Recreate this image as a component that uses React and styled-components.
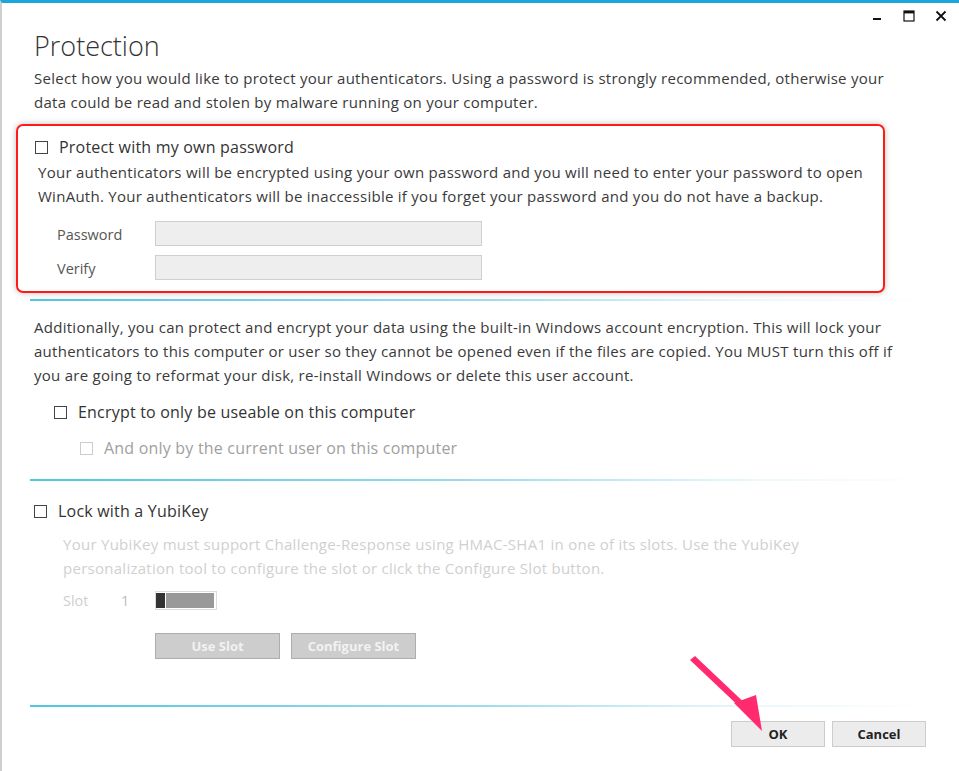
import styled, { createGlobalStyle } from "styled-components";

const GlobalStyle = createGlobalStyle`
  html, body {
    margin: 0;
    padding: 0;
    background: #ffffff;
  }
  body {
    font-family: "Open Sans", "Noto Sans", sans-serif;
    color: #3a3a3a;
  }
`;

const Window = styled.div`
  position: relative;
  width: 959px;
  height: 771px;
  box-sizing: border-box;
  border-top: 3px solid #1ba6dc;
  border-left: 2px solid #cfcfcf;
  background: #fff;
  overflow: hidden;
`;

const TitleBar = styled.div`
  display: flex;
  justify-content: flex-end;
  align-items: center;
  gap: 20px;
  height: 26px;
  padding-right: 12px;
`;

const Control = styled.div`
  width: 12px;
  height: 12px;
  display: flex;
  align-items: center;
  justify-content: center;
`;

const Content = styled.div`
  padding: 0 0 0 32px;
`;

const Heading = styled.h1`
  margin: 0;
  font-family: "Open Sans", sans-serif;
  font-weight: 300;
  font-size: 27px;
  line-height: 34px;
  color: #333;
  margin-bottom: 3px;
`;

const Para = styled.p`
  margin: ${(p) => p.$top || 0}px 0 0 ${(p) => p.$left || 0}px;
  font-size: 15px;
  line-height: ${(p) => p.$lh || 24}px;
  letter-spacing: 0.27px;
  color: ${(p) => (p.$muted ? "#d0d0d0" : "#3a3a3a")};
  white-space: nowrap;
`;

const Highlight = styled.div`
  margin: 10px 0 0 -18px;
  width: 869px;
  box-sizing: border-box;
  border: 2px solid #ff1a1a;
  border-radius: 7px;
  box-shadow: 0 0 6px rgba(0, 0, 0, 0.25);
  padding: 9px 0 11px 17px;
`;

const CheckRow = styled.label`
  display: flex;
  align-items: center;
  gap: 11px;
  height: 24px;
  margin: ${(p) => p.$top || 0}px 0 0 ${(p) => p.$left || 0}px;
  font-size: 16px;
  letter-spacing: 0.2px;
  color: ${(p) => (p.$disabled ? "#a0a0a0" : "#333")};
`;

const Box = styled.span`
  width: 11px;
  height: 11px;
  border: 1px solid ${(p) => (p.$disabled ? "#cccccc" : "#444")};
  background: #fff;
  flex: none;
`;

const FieldGrid = styled.div`
  display: grid;
  grid-template-columns: 98px 327px;
  row-gap: 9px;
  margin: 13px 0 0 22px;
  align-items: center;
`;

const FieldLabel = styled.span`
  font-size: 14.5px;
  color: #555;
  padding-top: 2px;
`;

const Input = styled.div`
  height: 25px;
  box-sizing: border-box;
  border: 1px solid #cfcfcf;
  background: #eeeeee;
`;

const Separator = styled.div`
  height: 2px;
  width: 900px;
  margin: ${(p) => p.$top}px 0 0 -4px;
  background: linear-gradient(90deg, #4fc6e2 0%, #9ddcec 50%, rgba(220, 242, 248, 0.6) 80%, rgba(255, 255, 255, 0) 100%);
`;

const SlotRow = styled.div`
  display: flex;
  align-items: center;
  height: 20px;
  margin: 10px 0 0 29px;
  font-size: 14.5px;
  color: #cfcfcf;
`;

const SlotLabel = styled.span`
  width: 58px;
`;

const SlotNum = styled.span`
  width: 34px;
  color: #bdbdbd;
`;

const Toggle = styled.div`
  display: flex;
  width: 62px;
  height: 19px;
  box-sizing: border-box;
  border: 1px solid #dcdcdc;
  padding: 1px 2px 1px 0;
  gap: 1px;
`;

const Thumb = styled.div`
  width: 9px;
  background: #333;
`;

const Track = styled.div`
  flex: 1;
  background: #999;
`;

const ButtonRow = styled.div`
  display: flex;
  gap: ${(p) => p.$gap}px;
  margin: ${(p) => p.$top}px 0 0 ${(p) => p.$left}px;
`;

const Button = styled.button`
  width: ${(p) => p.$w}px;
  height: 26px;
  box-sizing: border-box;
  border: 1px solid ${(p) => (p.$disabled ? "#adadad" : "#cccccc")};
  background: ${(p) => (p.$disabled ? "#cdcdcd" : "#ececec")};
  color: ${(p) => (p.$disabled ? "#f2f2f2" : "#222")};
  font-family: "Open Sans", sans-serif;
  font-weight: 700;
  font-size: 13px;
  padding: 0;
  cursor: default;
`;

const Arrow = styled.svg`
  position: absolute;
  left: 680px;
  top: 648px;
  width: 90px;
  height: 90px;
  pointer-events: none;
`;

export default function App() {
  return (
    <>
      <GlobalStyle />
      <Window>
        <TitleBar>
          <Control>
            <svg width="10" height="12" viewBox="0 0 10 12">
              <rect x="1" y="8" width="8" height="2" fill="#111" />
            </svg>
          </Control>
          <Control>
            <svg width="12" height="12" viewBox="0 0 12 12">
              <rect x="1" y="1" width="10" height="10" fill="none" stroke="#111" strokeWidth="1.2" />
              <rect x="1" y="1" width="10" height="2.4" fill="#111" />
            </svg>
          </Control>
          <Control>
            <svg width="12" height="12" viewBox="0 0 12 12">
              <path d="M1.5 1.5 L10.5 10.5 M10.5 1.5 L1.5 10.5" stroke="#111" strokeWidth="1.8" />
            </svg>
          </Control>
        </TitleBar>
        <Content>
          <Heading>Protection</Heading>
          <Para>
            Select how you would like to protect your authenticators. Using a password is strongly recommended, otherwise your
            <br />
            data could be read and stolen by malware running on your computer.
          </Para>

          <Highlight>
            <CheckRow>
              <Box />
              Protect with my own password
            </CheckRow>
            <Para $top={2} $left={3} $lh={23.5}>
              Your authenticators will be encrypted using your own password and you will need to enter your password to open
              <br />
              WinAuth. Your authenticators will be inaccessible if you forget your password and you do not have a backup.
            </Para>
            <FieldGrid>
              <FieldLabel>Password</FieldLabel>
              <Input />
              <FieldLabel>Verify</FieldLabel>
              <Input />
            </FieldGrid>
          </Highlight>

          <Separator $top={6} />

          <Para $top={14}>
            Additionally, you can protect and encrypt your data using the built-in Windows account encryption. This will lock your
            <br />
            authenticators to this computer or user so they cannot be opened even if the files are copied. You MUST turn this off if
            <br />
            you are going to reformat your disk, re-install Windows or delete this user account.
          </Para>

          <CheckRow $top={13} $left={20}>
            <Box />
            Encrypt to only be useable on this computer
          </CheckRow>
          <CheckRow $top={12} $left={46} $disabled>
            <Box $disabled />
            And only by the current user on this computer
          </CheckRow>

          <Separator $top={19} />

          <CheckRow $top={18}>
            <Box />
            Lock with a YubiKey
          </CheckRow>
          <Para $top={10} $left={29} $lh={23.5} $muted>
            Your YubiKey must support Challenge-Response using HMAC-SHA1 in one of its slots. Use the YubiKey
            <br />
            personalization tool to configure the slot or click the Configure Slot button.
          </Para>
          <SlotRow>
            <SlotLabel>Slot</SlotLabel>
            <SlotNum>1</SlotNum>
            <Toggle>
              <Thumb />
              <Track />
            </Toggle>
          </SlotRow>
          <ButtonRow $top={23} $left={121} $gap={11}>
            <Button $w={125} $disabled>Use Slot</Button>
            <Button $w={125} $disabled>Configure Slot</Button>
          </ButtonRow>

          <Separator $top={46} />

          <ButtonRow $top={14} $left={697} $gap={7}>
            <Button $w={94}>OK</Button>
            <Button $w={94}>Cancel</Button>
          </ButtonRow>
        </Content>

        <Arrow viewBox="0 0 90 90">
          <path d="M8 9 L13 5 L69 58 L64 62 Z" fill="#ff2b6e" />
          <polygon points="52,52 80,80 74,44" fill="#ff2b6e" />
        </Arrow>
      </Window>
    </>
  );
}
